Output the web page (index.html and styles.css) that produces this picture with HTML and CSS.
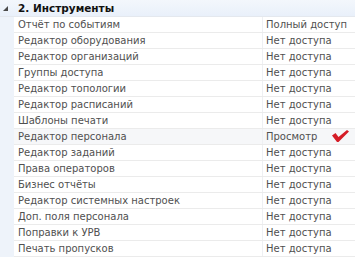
FILE: index.html
```html
<!DOCTYPE html>
<html lang="ru">
<head>
<meta charset="utf-8">
<link rel="stylesheet" href="styles.css">
</head>
<body>
<div class="grid">
  <div class="group">
    <span class="arrow"></span>
    <span class="group-title">2. Инструменты</span>
  </div>
  <div class="row"><div class="name">Отчёт по событиям</div><div class="val">Полный доступ</div></div>
  <div class="row"><div class="name">Редактор оборудования</div><div class="val">Нет доступа</div></div>
  <div class="row"><div class="name">Редактор организаций</div><div class="val">Нет доступа</div></div>
  <div class="row"><div class="name">Группы доступа</div><div class="val">Нет доступа</div></div>
  <div class="row"><div class="name">Редактор топологии</div><div class="val">Нет доступа</div></div>
  <div class="row"><div class="name">Редактор расписаний</div><div class="val">Нет доступа</div></div>
  <div class="row"><div class="name">Шаблоны печати</div><div class="val">Нет доступа</div></div>
  <div class="row selected"><div class="name">Редактор персонала</div><div class="val">Просмотр
    <svg class="check" width="17" height="12" viewBox="0 0 17 12"><path d="M0 5.5 L3.5 3 L6.5 7 L15 0 L17 1.5 L6.5 12 L5 12 Z" fill="#d51d27"/></svg></div></div>
  <div class="row"><div class="name">Редактор заданий</div><div class="val">Нет доступа</div></div>
  <div class="row"><div class="name">Права операторов</div><div class="val">Нет доступа</div></div>
  <div class="row"><div class="name">Бизнес отчёты</div><div class="val">Нет доступа</div></div>
  <div class="row"><div class="name">Редактор системных настроек</div><div class="val">Нет доступа</div></div>
  <div class="row"><div class="name">Доп. поля персонала</div><div class="val">Нет доступа</div></div>
  <div class="row"><div class="name">Поправки к УРВ</div><div class="val">Нет доступа</div></div>
  <div class="row"><div class="name">Печать пропусков</div><div class="val">Нет доступа</div></div>
</div>
</body>
</html>
```
FILE: styles.css
```css
html, body {
  margin: 0;
  padding: 0;
  background: #ffffff;
}
.grid {
  width: 355px;
  font-family: "DejaVu Sans", sans-serif;
  font-size: 10px;
  color: #505050;
  background: linear-gradient(90deg, #eef3fa 14px, #ffffff 14px);
}
.group {
  height: 16px;
  display: flex;
  align-items: center;
  background: linear-gradient(#f3f7fc, #e9f0fa);
  border-bottom: 1px solid #e4e8ee;
}
.arrow {
  width: 0;
  height: 0;
  margin-left: 3px;
  border-left: 5px solid transparent;
  border-bottom: 5px solid #4a4a4a;
  margin-top: 1px;
}
.group-title {
  margin-left: 10px;
  font-weight: bold;
  color: #111;
  font-size: 10.5px;
}
.row {
  height: 15px;
  display: grid;
  grid-template-columns: 248px 1fr;
  margin-left: 14px;
  border-bottom: 1px solid #ebebeb;
}
.row.selected {
  background: #f6f7f9;
}
.name {
  padding-left: 4px;
  line-height: 15px;
  white-space: nowrap;
}
.val {
  padding-left: 3px;
  line-height: 15px;
  border-left: 1px solid #eef0f3;
  white-space: nowrap;
  display: flex;
  align-items: center;
}
.check {
  margin-left: 15px;
  margin-top: -1px;
}
```
